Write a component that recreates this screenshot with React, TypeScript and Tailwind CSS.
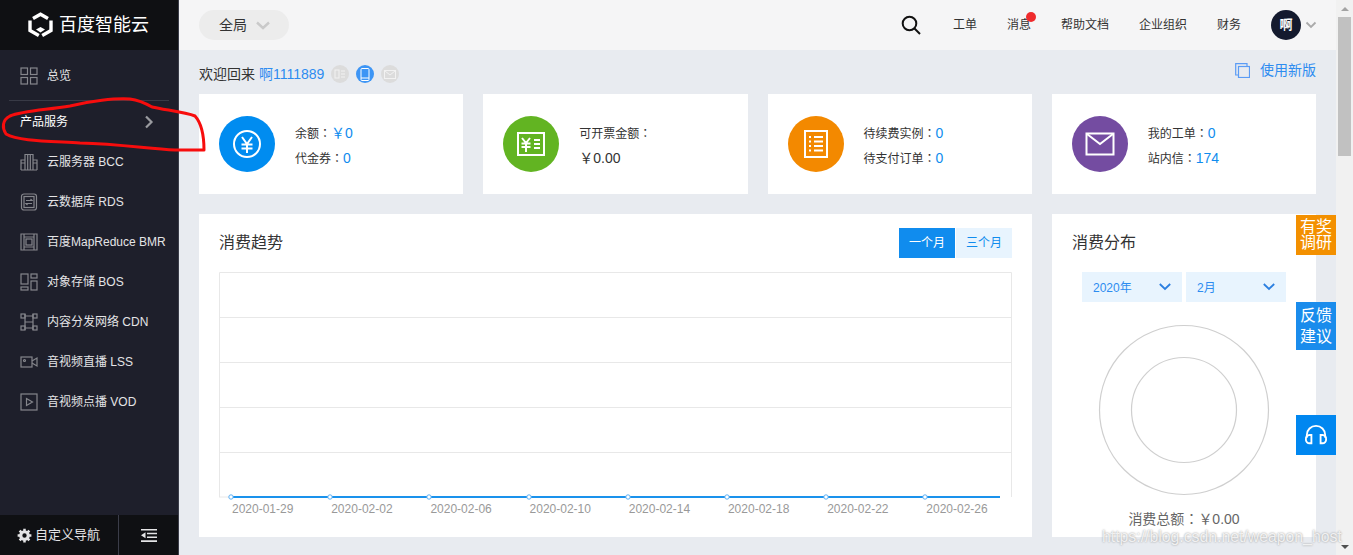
import React from "react";

const font = { fontFamily: '"Liberation Sans","Noto Sans CJK SC",sans-serif' };

const Ic = ({ children }: { children: React.ReactNode }) => (
  <svg width="18" height="18" viewBox="0 0 18 18" fill="none" stroke="#85868c" strokeWidth="1.2" className="shrink-0">
    {children}
  </svg>
);

const icons: Record<string, React.ReactNode> = {
  grid: (<><rect x="1" y="1" width="6.5" height="6.5" /><rect x="10.5" y="1" width="6.5" height="6.5" /><rect x="1" y="10.5" width="6.5" height="6.5" /><rect x="10.5" y="10.5" width="6.5" height="6.5" /></>),
  bcc: (<><path d="M1 17V7h4M17 17V7h-4M5 17V1.500h8V17M1 17h16M7.700 1.500V17M10.300 1.500V17M1 10h4M13 10h4" /></>),
  rds: (<><rect x="1.500" y="1" width="15" height="16" rx="2.500" /><rect x="4" y="3.500" width="10" height="11" /><path d="M6 7.500h6l-1.500-1.500M12 10.500H6l1.500 1.500" /></>),
  bmr: (<><path d="M1 1h16v16H1zM4 1v16M14 1v16" /><rect x="6" y="6" width="6" height="6" /><path d="M4 4h10M4 14h10" /></>),
  bos: (<><rect x="1" y="1" width="7" height="10" /><rect x="11" y="1" width="6" height="4" /><rect x="11" y="8" width="6" height="9" /><rect x="1" y="14" width="7" height="3" /></>),
  cdn: (<><rect x="1" y="1" width="4" height="4" /><rect x="13" y="1" width="4" height="4" /><rect x="1" y="13" width="4" height="4" /><rect x="13" y="13" width="4" height="4" /><path d="M5 1v16M13 1v16M5 9h8M5 3h8M5 15h8" /></>),
  lss: (<><rect x="1" y="4" width="11" height="10" /><path d="M12 8l5-3v8l-5-3" /><circle cx="4.500" cy="7.500" r="1" /></>),
  vod: (<><rect x="1" y="1" width="16" height="16" /><path d="M6.500 5.500v7l6-3.500z" /></>),
};

const menu = [
  ["bcc", "云服务器 BCC"],
  ["rds", "云数据库 RDS"],
  ["bmr", "百度MapReduce BMR"],
  ["bos", "对象存储 BOS"],
  ["cdn", "内容分发网络 CDN"],
  ["lss", "音视频直播 LSS"],
  ["vod", "音视频点播 VOD"],
];

const Sidebar = () => (
  <aside className="w-[179px] shrink-0 flex flex-col bg-[#1e1f2b] border-r border-[#3b3d49] text-[12px] text-[#e4e4e6]">
    <div className="h-[50px] bg-[#0f1013] flex items-center pl-[28px] gap-[6px]">
      <svg width="25" height="26" viewBox="0 0 25 26" fill="none" stroke="white" strokeWidth="3.400">
        <path d="M5 6.500L12.500 2.200 20 6.500" />
        <path d="M2 8.500V18.500L10.800 23.500" />
        <path d="M23 8.500V18.500L14.200 23.500" />
        <path d="M12.500 15l4.500 2.600-4.500 3-4.500-3z" fill="white" stroke="none" />
      </svg>
      <span className="text-[18px] font-normal text-white leading-none">百度智能云</span>
    </div>
    <div className="h-[40px] mt-[6px] flex items-center pl-[20px] gap-[9px]">
      <Ic>{icons.grid}</Ic>
      <span>总览</span>
    </div>
    <div className="mx-[9px] mt-[4px] mb-[1px] h-px bg-[#383a46]" />
    <div className="h-[40px] flex items-center justify-between pl-[20px] pr-[24px] text-white">
      <span>产品服务</span>
      <svg width="10" height="14" viewBox="0 0 10 14" fill="none" stroke="#9a9ba0" strokeWidth="2.200"><path d="M2 1.500L7.500 7 2 12.500" /></svg>
    </div>
    {menu.map(([k, t]) => (
      <div key={t} className="h-[40px] flex items-center pl-[20px] gap-[9px]">
        <Ic>{icons[k]}</Ic>
        <span className="whitespace-nowrap">{t}</span>
      </div>
    ))}
    <div className="mt-auto h-[40px] bg-[#0f1013] flex items-center">
      <div className="w-[119px] h-full flex items-center pl-[17px] gap-[3px] border-r border-[#3b3d49] text-[13px]">
        <svg width="15" height="15" viewBox="0 0 24 24" fill="none" stroke="#e4e4e6" strokeWidth="5"><circle cx="12" cy="12" r="6" /><path d="M12 1v4M12 19v4M1 12h4M19 12h4M4.200 4.200l3 3M16.800 16.800l3 3M4.200 19.800l3-3M16.800 7.200l3-3" strokeWidth="4" /></svg>
        <span className="whitespace-nowrap">自定义导航</span>
      </div>
      <div className="flex-1 flex items-center justify-center">
        <svg width="16" height="13" viewBox="0 0 16 13" fill="#e4e4e6"><path d="M0 0h16v1.600H0zM6 3.700h10v1.600H6zM6 7.500h10v1.600H6zM0 11.300h16V13H0zM4.500 3.300v6L0 6.300z" /></svg>
      </div>
    </div>
  </aside>
);

const Topbar = () => (
  <header className="h-[50px] bg-[#f5f5f6] flex items-center justify-between pl-[20px] pr-[19px] text-[12px] text-[#333]">
    <div className="w-[90px] h-[30px] rounded-full bg-[#ececec] flex items-center pl-[20px] gap-[9px] text-[14px]">
      <span>全局</span>
      <svg width="14" height="9" viewBox="0 0 14 9" fill="none" stroke="#c9c9c9" strokeWidth="2.400"><path d="M1 1.500l6 5.500 6-5.500" /></svg>
    </div>
    <div className="flex items-center">
      <svg width="20" height="20" viewBox="0 0 20 20" fill="none" stroke="#111" strokeWidth="2" className="mr-[32px]"><circle cx="8.500" cy="8.500" r="6.800" /><path d="M13.500 13.500L19 19" /></svg>
      <div className="flex items-center gap-[30px]">
        <span>工单</span>
        <span className="relative">
          消息
          <span className="absolute -top-[4px] -right-[5px] w-[10px] h-[10px] rounded-full bg-[#ef2b2d]" />
        </span>
        <span>帮助文档</span>
        <span>企业组织</span>
        <span>财务</span>
      </div>
      <div className="ml-[30px] w-[30px] h-[30px] rounded-full bg-[#141a2e] text-white font-bold flex items-center justify-center text-[13px]">啊</div>
      <svg width="12" height="8" viewBox="0 0 12 8" fill="none" stroke="#aaa" strokeWidth="1.800" className="ml-[4px]"><path d="M1.500 1.500l4.500 4.500 4.500-4.500" /></svg>
    </div>
  </header>
);

const Welcome = () => (
  <div className="h-[44px] pt-[4px] flex items-center justify-between text-[14px] text-[#333]">
    <div className="flex items-center">
      <span>欢迎回来</span>
      <span className="ml-[4px] text-[#2d8cf0]">啊1111889</span>
      <div className="flex items-center gap-[7px] ml-[7px]">
        <span className="w-[18px] h-[18px] rounded-full bg-[#dcdcdc] flex items-center justify-center">
          <svg width="12" height="10" viewBox="0 0 12 10" fill="none" stroke="#f2f2f2"><rect x="1" y="1" width="4" height="8" /><path d="M7 2h4M7 5h4M7 8h4" /></svg>
        </span>
        <span className="w-[18px] h-[18px] rounded-full bg-[#3d95f5] flex items-center justify-center">
          <svg width="10" height="13" viewBox="0 0 10 13" fill="none" stroke="white"><rect x="1" y=".500" width="8" height="12" rx="1" /><path d="M1 10h8" /></svg>
        </span>
        <span className="w-[18px] h-[18px] rounded-full bg-[#dcdcdc] flex items-center justify-center">
          <svg width="12" height="9" viewBox="0 0 12 9" fill="none" stroke="#f2f2f2"><rect x=".500" y=".500" width="11" height="8" /><path d="M1 1l5 4 5-4" /></svg>
        </span>
      </div>
    </div>
    <div className="flex items-center gap-[10px] text-[#2d8cf0] -mt-[8px]">
      <svg width="15" height="15" viewBox="0 0 15 15" fill="none" stroke="#5b9cf5" strokeWidth="1.200"><rect x="3.500" y="3.500" width="11" height="11" /><path d="M3.500 12H.7V.7H12v2.800" /></svg>
      <span>使用新版</span>
    </div>
  </div>
);

const Stat = ({ color, icon, a, b }: { color: string; icon: React.ReactNode; a: React.ReactNode; b: React.ReactNode }) => (
  <div className="h-[100px] bg-white flex items-center pl-[20px] gap-[20px] text-[12px] text-[#333]">
    <div className={`w-[56px] h-[56px] rounded-full flex items-center justify-center ${color}`}>{icon}</div>
    <div className="flex flex-col gap-[7px] mt-[3px]">
      <div className="h-[18px] leading-[18px]">{a}</div>
      <div className="h-[18px] leading-[18px]">{b}</div>
    </div>
  </div>
);

const V = ({ children }: { children: React.ReactNode }) => <span className="text-[14px] text-[#108cee]">{children}</span>;
const C = () => <span className="font-['Noto_Sans_CJK_TC']">：</span>;

const Stats = () => (
  <div className="grid grid-cols-4 gap-[20px]">
    <Stat
      color="bg-[#008cf0]"
      icon={<svg width="30" height="30" viewBox="0 0 30 30" fill="none" stroke="white" strokeWidth="2"><circle cx="15" cy="15" r="13" /><path d="M10 8l5 7 5-7M9.500 15.500h11M9.500 19.500h11M15 15v9" /></svg>}
      a={<>余额<C /><V>￥0</V></>}
      b={<>代金券<C /><V>0</V></>}
    />
    <Stat
      color="bg-[#62b422]"
      icon={<svg width="30" height="26" viewBox="0 0 30 26" fill="none" stroke="white" strokeWidth="2"><rect x="2" y="2" width="26" height="22" /><path d="M6 7l4 5 4-5M5.500 12.500h9M5.500 16h9M10 12.500V21M18 9h6M18 13h6M18 17h6" /></svg>}
      a={<>可开票金额<C /></>}
      b={<span className="text-[14px]">￥0.00</span>}
    />
    <Stat
      color="bg-[#f38900]"
      icon={<svg width="26" height="30" viewBox="0 0 26 30" fill="none" stroke="white" strokeWidth="2"><rect x="2" y="2" width="22" height="26" /><path d="M6 8h2M11 8h9M6 12.500h2M11 12.500h9M6 17h2M11 17h9M6 21.500h2M11 21.500h9" /></svg>}
      a={<>待续费实例<C /><V>0</V></>}
      b={<>待支付订单<C /><V>0</V></>}
    />
    <Stat
      color="bg-[#744ca1]"
      icon={<svg width="30" height="24" viewBox="0 0 30 24" fill="none" stroke="white" strokeWidth="2"><rect x="1.500" y="1.500" width="27" height="21" /><path d="M2 2l13 10L28 2" /></svg>}
      a={<>我的工单<C /><V>0</V></>}
      b={<>站内信<C /><V>174</V></>}
    />
  </div>
);

const dates = ["2020-01-29", "2020-02-02", "2020-02-06", "2020-02-10", "2020-02-14", "2020-02-18", "2020-02-22", "2020-02-26"];

const Trend = () => (
  <section className="h-[323px] bg-white px-[20px] pt-[14px] relative">
    <div className="flex items-center justify-between h-[30px]">
      <h2 className="text-[16px] text-[#333]">消费趋势</h2>
      <div className="flex text-[12px] gap-px">
        <span className="w-[56px] h-[30px] bg-[#108cee] text-white flex items-center justify-center">一个月</span>
        <span className="w-[56px] h-[30px] bg-[#e8f4fe] text-[#108cee] flex items-center justify-center">三个月</span>
      </div>
    </div>
    <div className="mt-[14px] w-[793px] h-[245px]">
      <svg width="793" height="245" viewBox="0 0 793 245" className="block">
        <path d="M.5 225V.5H792.500V225M0 45.500h793M0 90.500h793M0 135.500h793M0 180.500h793" stroke="#e8e8e8" fill="none" />
        <path d="M12 225H781" stroke="#1a92ec" strokeWidth="2" />
        <path d="M0 225h12" stroke="#e8e8e8" />
        {[12, 111, 210, 310, 409, 508, 607, 706].map((x) => (
          <circle key={x} cx={x} cy="225" r="2.200" fill="white" stroke="#5cb0f5" />
        ))}
      </svg>
      <div className="flex -mt-[14px] pl-[13px] text-[12px] text-[#999] leading-none">
        {dates.map((d) => (
          <span key={d} className="w-[99.200px] shrink-0">{d}</span>
        ))}
      </div>
    </div>
  </section>
);

const Sel = ({ t }: { t: string }) => (
  <div className="w-[100px] h-[30px] bg-[#e8f4fe] flex items-center justify-between pl-[11px] pr-[11px] text-[12px] text-[#2d8cf0]">
    <span className="pt-[2px]">{t}</span>
    <svg width="12" height="8" viewBox="0 0 12 8" fill="none" stroke="#2b7fe0" strokeWidth="1.800"><path d="M.8 1l5.200 5 5.200-5" /></svg>
  </div>
);

const Dist = () => (
  <section className="h-[323px] bg-white pt-[14px] flex flex-col">
    <h2 className="pl-[20px] h-[30px] leading-[30px] text-[16px] text-[#333]">消费分布</h2>
    <div className="flex gap-[4px] pl-[30px] mt-[14px]">
      <Sel t="2020年" />
      <Sel t="2月" />
    </div>
    <div className="mt-[22px] flex justify-center">
      <svg width="172" height="172" viewBox="0 0 172 172" fill="none" stroke="#cfcfcf" strokeWidth="1.200" className="block"><circle cx="86" cy="86" r="84.500" /><circle cx="86" cy="86" r="52.500" /></svg>
    </div>
    <p className="mt-[12px] text-center text-[14px] leading-[20px] text-[#666]">消费总额<C />￥0.00</p>
  </section>
);

const Scrollbar = () => (
  <div className="w-[17px] shrink-0 bg-[#f1f1f1] flex flex-col items-center relative">
    <div className="h-[17px] flex items-center justify-center">
      <span className="w-0 h-0 border-x-[4px] border-x-transparent border-b-[4px] border-b-[#a3a3a3]" />
    </div>
    <div className="w-[13px] h-[139px] bg-[#c1c1c1]" />
    <div className="mt-auto h-[17px] flex items-center justify-center">
      <span className="w-0 h-0 border-x-[4px] border-x-transparent border-t-[4px] border-t-[#505050]" />
    </div>
  </div>
);

export default function App() {
  return (
    <div className="relative w-[1353px] h-[555px] overflow-hidden flex bg-[#e8ebf0]" style={font}>
      <Sidebar />
      <div className="flex-1 min-w-0 flex flex-col">
        <Topbar />
        <main className="px-[20px] flex-1 overflow-hidden">
          <Welcome />
          <Stats />
          <div className="grid grid-cols-[1fr_264px] gap-[20px] mt-[20px]">
            <Trend />
            <Dist />
          </div>
        </main>
      </div>
      <Scrollbar />

      <div className="absolute left-[1296px] top-[215px] w-[40px] h-[40px] bg-[#f39000] text-white text-[16px] leading-[16px] flex items-center justify-center text-center">有奖<br />调研</div>
      <div className="absolute left-[1296px] top-[302px] w-[40px] h-[48px] bg-[#1a8cec] text-white text-[16px] leading-[21px] flex items-center justify-center text-center">反馈<br />建议</div>
      <div className="absolute left-[1296px] top-[415px] w-[40px] h-[40px] bg-[#0087f0] flex items-center justify-center">
        <svg width="24" height="22" viewBox="0 0 26 24" fill="none" stroke="white" strokeWidth="2"><path d="M3 15v-3a10 10 0 0120 0v3" /><path d="M8 12v9H6a4 4 0 01-4-4.500A4 4 0 016 12zM18 12v9h2a4 4 0 004-4.500A4 4 0 0020 12z" /></svg>
      </div>

      <svg className="absolute left-0 top-0 pointer-events-none" width="210" height="155" viewBox="0 0 210 155" fill="none" stroke="#f70d0d" strokeWidth="3" strokeLinejoin="round">
        <path d="M130 99C115 98 90 101 70 106C45 110 22 111 10 116C2 120 2 128 6 134C18 141 45 141 80 143C120 144 150 149 175 150L204 150C204 140 203 125 195 116C185 112 165 110 152 107C145 103 138 100 130 99Z" />
      </svg>

      <span className="absolute left-[1102px] top-[527px] text-[15.800px] leading-[20px] text-white/80 whitespace-nowrap [text-shadow:0_0_2px_#8a8a8a]">https://blog.csdn.net/weapon_host</span>
    </div>
  );
}
